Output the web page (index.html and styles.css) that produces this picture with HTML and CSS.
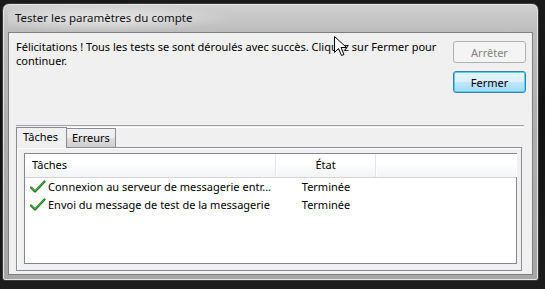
FILE: index.html
```html
<!DOCTYPE html>
<html lang="fr">
  <head>
    <meta charset="UTF-8" />
    <title>Tester les paramètres du compte</title>
    <link rel="stylesheet" href="styles.css">
  </head>
  <body>
    <div class="window">
      <div class="titlebar">Tester les paramètres du compte</div>
      <div class="client">
        <div class="top">
          <p class="message">Félicitations ! Tous les tests se sont déroulés avec succès. Cliquez sur Fermer pour continuer.</p>
          <div class="buttons">
            <button class="btn" disabled>Arrêter</button>
            <button class="btn default">Fermer</button>
          </div>
        </div>
        <div class="separator"></div>
        <div class="tabs">
          <div class="tab-strip">
            <div class="tab selected">Tâches</div>
            <div class="tab">Erreurs</div>
          </div>
          <div class="tab-panel">
            <div class="listview">
              <div class="lv-header">
                <div class="col col-task">Tâches</div>
                <div class="col col-state">État</div>
                <div class="col col-rest"></div>
              </div>
              <div class="lv-row">
                <div class="col-task cell">
                  <svg class="check" width="16" height="14" viewBox="0 0 16 14">
                    <path d="M1 7.5 L5 11.5 L14.5 1.5" fill="none" stroke="#1f7a1f" stroke-width="2.4" stroke-linecap="round" stroke-linejoin="round"/>
                    <path d="M1.5 7.5 L5 11 L14 1.8" fill="none" stroke="#4fb84f" stroke-width="0.9" stroke-linecap="round"/>
                  </svg>
                  Connexion au serveur de messagerie entr...
                </div>
                <div class="col-state cell">Terminée</div>
              </div>
              <div class="lv-row">
                <div class="col-task cell">
                  <svg class="check" width="16" height="14" viewBox="0 0 16 14">
                    <path d="M1 7.5 L5 11.5 L14.5 1.5" fill="none" stroke="#1f7a1f" stroke-width="2.4" stroke-linecap="round" stroke-linejoin="round"/>
                    <path d="M1.5 7.5 L5 11 L14 1.8" fill="none" stroke="#4fb84f" stroke-width="0.9" stroke-linecap="round"/>
                  </svg>
                  Envoi du message de test de la messagerie
                </div>
                <div class="col-state cell">Terminée</div>
              </div>
            </div>
          </div>
        </div>
      </div>
    </div>
    <svg class="cursor" width="14" height="22" viewBox="0 0 14 22">
      <path d="M0.5 0.5 L0.5 16.5 L4.5 12.5 L7.5 19.5 L10 18.5 L7 11.5 L12.5 11.5 Z" fill="#fff" stroke="#000" stroke-width="1"/>
    </svg>
  </body>
</html>
```

FILE: styles.css
```css
body {
  margin: 0;
  width: 545px;
  height: 289px;
  overflow: hidden;
  background: linear-gradient(#1a1a1a, #111 40%, #1c1c1c);
  font-family: "Noto Sans", "Liberation Sans", sans-serif;
  font-size: 11px;
  color: #000;
  position: relative;
}
.window {
  margin: 3px 0 0 2px;
  width: 537px;
  height: 278px;
  box-sizing: border-box;
  border: 1px solid #3a3a3a;
  border-radius: 7px 7px 3px 3px;
  background: linear-gradient(#d0d0d0, #bdbdbd 10%, #b0b0b0 40%, #a6a6a6);
  box-shadow: inset 0 0 0 1px #e4e4e4;
  padding: 0 5px 5px 5px;
  display: flex;
  flex-direction: column;
}
.titlebar {
  height: 28px;
  line-height: 27px;
  padding-left: 7px;
  color: #111;
  font-size: 11.5px;
  background: radial-gradient(ellipse 130px 14px at 95px 14px, rgba(255, 255, 255, 0.6), rgba(255, 255, 255, 0));
}
.client {
  flex: 1;
  background-color: #f0f0f0;
  border: 1px solid #7f7f7f;
  box-sizing: border-box;
  display: flex;
  flex-direction: column;
}
.top {
  display: flex;
  justify-content: space-between;
  height: 92px;
}
.message {
  margin: 7px 0 0 7px;
  width: 430px;
  line-height: 14px;
}
.buttons {
  display: flex;
  flex-direction: column;
  gap: 8px;
  padding: 8px 6px 0 0;
}
.btn {
  width: 73px;
  height: 22px;
  font-family: inherit;
  font-size: 11px;
  border-radius: 3px;
  border: 1px solid #707070;
  background: linear-gradient(#f2f2f2, #ebebeb 50%, #dddddd 51%, #cfcfcf);
  padding: 0;
  color: #000;
}
.btn:disabled {
  border-color: #adb2b5;
  background: #f4f4f4;
  color: #838383;
}
.btn.default {
  border-color: #3c7fb1;
  background: linear-gradient(#eaf6fd, #d9f0fc 50%, #bee6fd 51%, #a7d9f5);
  box-shadow: inset 0 0 0 1px #48d6f9;
}
.separator {
  margin: 0 8px 0 7px;
  height: 1px;
  border-top: 1px solid #a0a0a0;
  border-bottom: 1px solid #fff;
}
.tabs {
  margin: -1px 10px 0 7px;
  display: flex;
  flex-direction: column;
}
.tab-strip {
  display: flex;
  align-items: flex-end;
  height: 20px;
}
.tab {
  height: 18px;
  line-height: 17px;
  padding: 0 5px;
  border: 1px solid #898c95;
  border-bottom: none;
  background: linear-gradient(#f2f2f2, #ebebeb 50%, #dddddd 51%, #cfcfcf);
  margin-left: -1px;
}
.tab.selected {
  height: 20px;
  line-height: 18px;
  padding: 0 8px 0 6px;
  background: #f0f0f0;
  position: relative;
  z-index: 1;
  margin-bottom: -1px;
  margin-left: 0;
}
.tab-panel {
  border: 1px solid #898c95;
  box-shadow: inset 1px 1px 0 #fff;
  height: 124px;
  box-sizing: border-box;
  padding: 5px 4px 0 7px;
}
.listview {
  background: #fff;
  border: 1px solid #828790;
  height: 111px;
  box-sizing: border-box;
}
.lv-header {
  display: flex;
  height: 23px;
  background: linear-gradient(#fff, #fff 40%, #f3f4f6);
  border-bottom: 1px solid #d5d5d5;
}
.col {
  line-height: 22px;
  border-right: 1px solid #e3e5e8;
  box-shadow: 1px 0 0 #fff;
}
.col-task {
  width: 251px;
  padding-left: 7px;
  box-sizing: border-box;
}
.col-state {
  width: 100px;
  text-align: center;
  box-sizing: border-box;
}
.col-rest {
  flex: 1;
  border-right: none;
}
.lv-row {
  display: flex;
  height: 18px;
  line-height: 18px;
}
.cell {
  display: flex;
  align-items: center;
  white-space: nowrap;
  gap: 2px;
}
.col-state.cell {
  justify-content: center;
}
.lv-row .col-task {
  padding-left: 5px;
}
.check {
  flex: none;
}
.cursor {
  position: absolute;
  left: 334px;
  top: 36px;
}
```
